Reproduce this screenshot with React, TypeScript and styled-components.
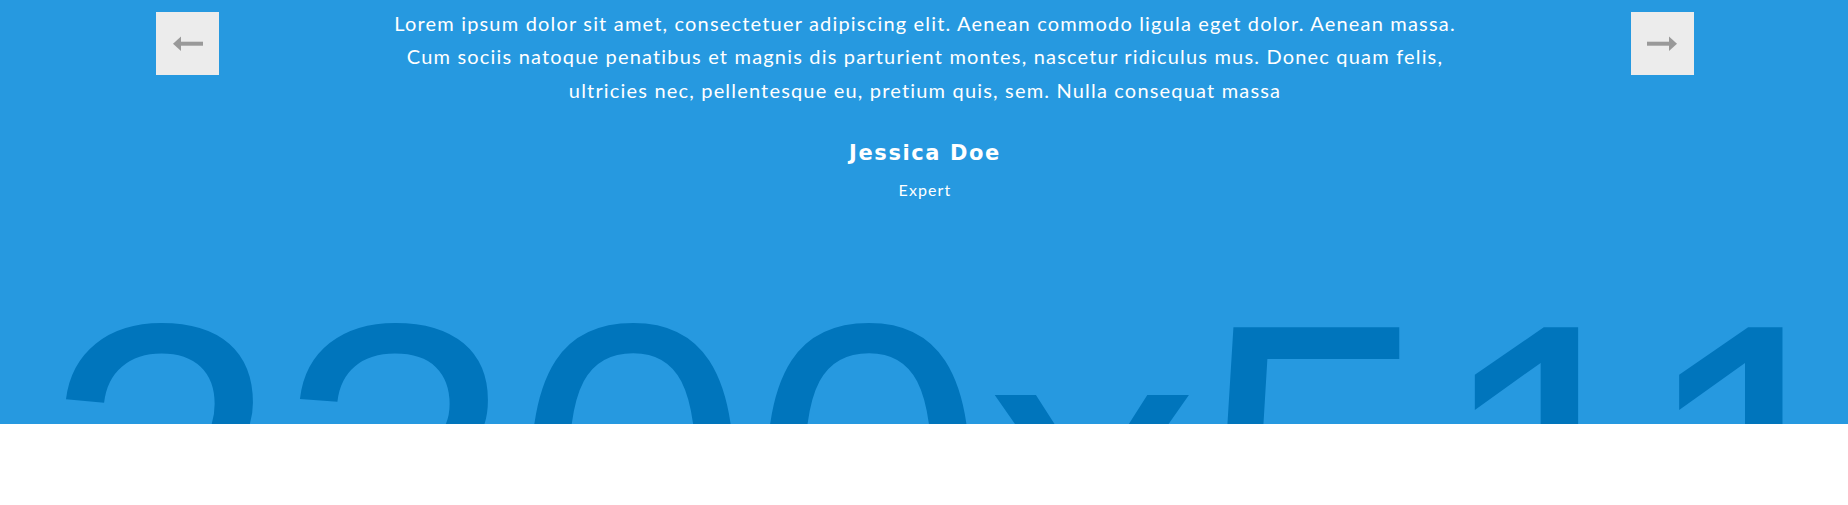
import React from "react";
import styled, { createGlobalStyle } from "styled-components";

const GlobalStyle = createGlobalStyle`
  html, body { margin: 0; padding: 0; background: #ffffff; }
  body { font-family: "Lato", "Liberation Sans", sans-serif; }
`;

const Section = styled.section`
  position: relative;
  height: 424px;
  overflow: hidden;
  background: #2699e0;
`;

const BackdropText = styled.div`
  position: absolute;
  top: 260px;
  left: 43px;
  font-family: "Liberation Sans", Arial, sans-serif;
  font-size: 424px;
  line-height: 1;
  color: #0075bc;
  white-space: nowrap;
  pointer-events: none;
  user-select: none;
`;

const Row = styled.div`
  position: relative;
  display: flex;
  align-items: flex-start;
  padding: 7px 154px 0 156px;
`;

const NavButton = styled.button`
  flex: 0 0 auto;
  width: 63px;
  height: 63px;
  margin-top: 5px;
  padding: 0;
  border: none;
  background: #ececec;
  display: flex;
  align-items: center;
  justify-content: center;
  cursor: pointer;
  svg { display: block; }
`;

const Content = styled.div`
  flex: 1 1 auto;
  text-align: center;
  color: #ffffff;
`;

const Quote = styled.p`
  margin: 0;
  font-family: "Lato", sans-serif;
  font-size: 20px;
  line-height: 33.4px;
  font-weight: 400;
  letter-spacing: 1.18px;
`;

const Name = styled.h4`
  margin: 33px 0 0;
  font-family: "DejaVu Sans", sans-serif;
  font-size: 21px;
  line-height: 26.4px;
  font-weight: 700;
  letter-spacing: 1.6px;
`;

const Role = styled.div`
  margin-top: 13px;
  font-family: "Lato", sans-serif;
  font-size: 16px;
  line-height: 19.2px;
  letter-spacing: 1.1px;
`;

const Arrow = ({ dir }: { dir: "left" | "right" }) => (
  <svg width="63" height="63" viewBox="0 0 63 63">
    {dir === "left" ? (
      <>
        <polygon points="17,31.7 25,24.5 25,38.9" fill="#999999" />
        <rect x="24" y="29.7" width="23" height="4" fill="#999999" />
      </>
    ) : (
      <>
        <polygon points="46,31.7 38,24.5 38,38.9" fill="#999999" />
        <rect x="16" y="29.7" width="23" height="4" fill="#999999" />
      </>
    )}
  </svg>
);

export default function App() {
  return (
    <>
      <GlobalStyle />
      <Section>
        <BackdropText aria-hidden="true">2300x511</BackdropText>
        <Row>
          <NavButton aria-label="Previous">
            <Arrow dir="left" />
          </NavButton>
          <Content>
            <Quote>
              Lorem ipsum dolor sit amet, consectetuer adipiscing elit. Aenean commodo ligula eget dolor. Aenean massa.
              <br />
              Cum sociis natoque penatibus et magnis dis parturient montes, nascetur ridiculus mus. Donec quam felis,
              <br />
              ultricies nec, pellentesque eu, pretium quis, sem. Nulla consequat massa
            </Quote>
            <Name>Jessica Doe</Name>
            <Role>Expert</Role>
          </Content>
          <NavButton aria-label="Next">
            <Arrow dir="right" />
          </NavButton>
        </Row>
      </Section>
    </>
  );
}
